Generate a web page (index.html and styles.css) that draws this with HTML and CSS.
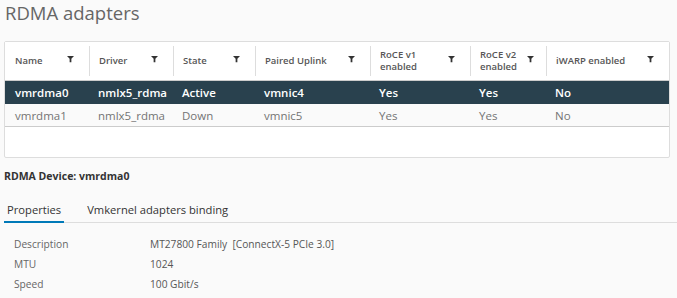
FILE: index.html
```html
<!DOCTYPE html>
<html lang="en">
<head>
    <meta charset="UTF-8">
    <title>RDMA adapters</title>
    <link rel="stylesheet" href="styles.css">
</head>
<body>
<div id="page">
    <h1 class="title">RDMA adapters</h1>

    <div class="grid">
        <div class="row head">
            <div class="cell">Name<svg class="filter" viewBox="0 0 8 8"><polygon points="0,0 8,0 5,3 5,7 3,7 3,3"/></svg></div>
            <div class="cell">Driver<svg class="filter" viewBox="0 0 8 8"><polygon points="0,0 8,0 5,3 5,7 3,7 3,3"/></svg></div>
            <div class="cell">State<svg class="filter" viewBox="0 0 8 8"><polygon points="0,0 8,0 5,3 5,7 3,7 3,3"/></svg></div>
            <div class="cell">Paired Uplink<svg class="filter" viewBox="0 0 8 8"><polygon points="0,0 8,0 5,3 5,7 3,7 3,3"/></svg></div>
            <div class="cell"><span>RoCE v1<br>enabled</span><svg class="filter" viewBox="0 0 8 8"><polygon points="0,0 8,0 5,3 5,7 3,7 3,3"/></svg></div>
            <div class="cell short"><span>RoCE v2<br>enabled</span><svg class="filter" viewBox="0 0 8 8"><polygon points="0,0 8,0 5,3 5,7 3,7 3,3"/></svg></div>
            <div class="cell">iWARP enabled<svg class="filter" viewBox="0 0 8 8"><polygon points="0,0 8,0 5,3 5,7 3,7 3,3"/></svg></div>
        </div>
        <div class="row selected">
            <div class="cell">vmrdma0</div>
            <div class="cell">nmlx5_rdma</div>
            <div class="cell">Active</div>
            <div class="cell">vmnic4</div>
            <div class="cell">Yes</div>
            <div class="cell">Yes</div>
            <div class="cell">No</div>
        </div>
        <div class="row">
            <div class="cell">vmrdma1</div>
            <div class="cell">nmlx5_rdma</div>
            <div class="cell">Down</div>
            <div class="cell">vmnic5</div>
            <div class="cell">Yes</div>
            <div class="cell">Yes</div>
            <div class="cell">No</div>
        </div>
        <div class="empty"></div>
    </div>

    <div class="device">RDMA Device: vmrdma0</div>

    <div class="tabs">
        <div class="tab active">Properties</div>
        <div class="tab">Vmkernel adapters binding</div>
    </div>

    <div class="props">
        <div class="label">Description</div>
        <div class="value">MT27800 Family&nbsp; [ConnectX-5 PCIe 3.0]</div>
        <div class="label">MTU</div>
        <div class="value">1024</div>
        <div class="label">Speed</div>
        <div class="value">100 Gbit/s</div>
    </div>
</div>
</body>
</html>
```

FILE: styles.css
```css
body {
    margin: 0;
    background: #fafafa;
    font-family: "Open Sans", "Liberation Sans", sans-serif;
    color: #565656;
}

#page {
    padding: 0 7px 0 4px;
}

.title {
    margin: 0;
    padding: 1px 0 0 1px;
    font-size: 18.5px;
    line-height: 24px;
    font-weight: 400;
    color: #666;
    height: 40px;
}

.grid {
    width: 664px;
    background: #fff;
    border: 1px solid #ddd;
    border-radius: 2px;
}

.row {
    display: grid;
    grid-template-columns: 84px 84px 82px 115px 100px 76px 123px;
    height: 22px;
    align-items: center;
    font-size: 11.5px;
    background: #fafafa;
    color: #747474;
    border-bottom: 1px solid #ccc;
}

.row .cell {
    padding-left: 9px;
}

.row.head {
    height: 38px;
    background: #fff;
    color: #565656;
    font-size: 9.5px;
    font-weight: 600;
    line-height: 12px;
    border-bottom: 1px solid #ccc;
}

.row.head .cell {
    display: flex;
    justify-content: space-between;
    align-items: center;
    height: 30px;
    padding-right: 15px;
    border-left: 1px solid #ddd;
}

.row.head .cell:first-child {
    border-left: none;
    padding-left: 10px;
}

.row.head .cell.short {
    padding-right: 12px;
}

.filter {
    width: 7px;
    height: 7px;
    fill: #333;
    margin-bottom: 4px;
}

.row.selected {
    background: #29414e;
    color: #fff;
    font-weight: 600;
    height: 23px;
    border-bottom: none;
}

.row .cell:first-child {
    padding-left: 10px;
}

.empty {
    height: 30px;
}

.device {
    margin-top: 11px;
    font-size: 10.5px;
    font-weight: 700;
    color: #333;
    height: 20px;
}

.tabs {
    display: flex;
    margin-top: 11px;
    border-bottom: 1px solid #ddd;
    width: 673px;
}

.tab {
    font-size: 11.2px;
    line-height: 16px;
    padding: 2px 3px 3px 3px;
    margin-right: 20px;
    color: #333;
    border-bottom: 2px solid transparent;
    margin-bottom: -1px;
}

.tab.active {
    border-bottom-color: #0079b8;
}

.props {
    display: grid;
    grid-template-columns: 136px 500px;
    grid-auto-rows: 20px;
    align-items: center;
    padding: 11px 0 0 10px;
    font-size: 10.2px;
    color: #666;
}

.value {
    color: #565656;
}
```
